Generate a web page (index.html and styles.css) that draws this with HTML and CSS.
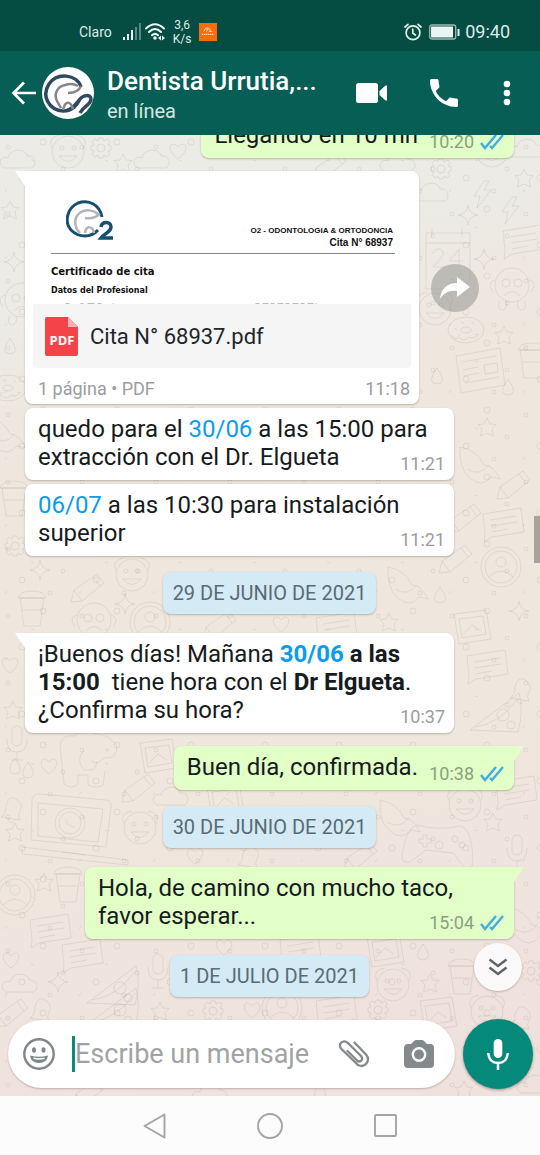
FILE: index.html
```html
<!DOCTYPE html>
<html lang="es">
<head>
<meta charset="utf-8">
<meta name="viewport" content="width=device-width, initial-scale=1">
<title>Chat</title>
<link rel="stylesheet" href="styles.css">
</head>
<body>
<div class="app">
  <div class="status">
    <span class="carrier">Claro</span>
    <svg class="signal" width="18" height="18" viewBox="0 0 18 18" fill="#f1f8f6"><rect x="0" y="14" width="2" height="3"/><rect x="4" y="11" width="2" height="6"/><rect x="8" y="7" width="2" height="10"/><g opacity=".35"><rect x="12" y="4" width="2" height="13"/><rect x="16" y="0" width="2" height="17"/></g></svg>
    <svg class="wifi" width="20" height="18" viewBox="0 0 20 18" fill="none" stroke="#f1f8f6" stroke-width="2" stroke-linecap="round"><path d="M1 5.500Q10-3 19 5.500M4 9Q10 3 16 9M7 12.300Q10 9.500 13 12.300"/><g fill="#f1f8f6" stroke="none"><circle cx="10" cy="15" r="1.800"/><path d="M13 15l3-2.500v5zM20 15l-3-2.500v5z"/></g></svg>
    <span class="speed">3,6<br>K/s</span>
    <svg class="shop" width="18" height="18" viewBox="0 0 19 19"><rect width="19" height="19" fill="#fb6a0d"/><g fill="none" stroke="#ffe3cc"><path d="M5 9q1-4 5-4M8 9q0-3 3-3 2 1 0 3h3" /><path d="M3 12h13" stroke-dasharray="1.500 .6" stroke-width="1.500"/></g></svg>
    <svg class="alarm" width="18" height="18" viewBox="0 0 18 18" fill="none" stroke="#e3efec" stroke-width="1.700" stroke-linecap="round"><circle cx="9" cy="9.700" r="6.900"/><path d="M8.800 6v4l2.500 2M1 4l3-2.700M17 4l-3-2.700"/></svg>
    <svg class="battery" width="31" height="16" viewBox="0 0 31 16"><rect x=".7" y="1" width="26" height="14" rx="2" fill="none" stroke="#9dbbb5" stroke-width="1.300"/><rect x="2" y="2.500" width="22" height="11" fill="#eaf3f1"/><rect x="28.500" y="5" width="2" height="7" fill="#e3efec"/></svg>
    <span class="clock">09:40</span>
  </div>

  <header class="header">
    <button class="icon-btn" aria-label="Atrás"><svg width="26" height="26" viewBox="0 0 26 26" fill="none" stroke="#fff" stroke-width="2.700"><path d="M25 13H3M13 2.500L2.500 13 13 23.500"/></svg></button>
    <svg class="avatar" width="52" height="52" viewBox="0 0 52 52" fill="none"><circle cx="26" cy="26" r="26" fill="#fff"/><path d="M39 20C35 7 15 5 7 17-1 29 7 43 21 44c10 0 14-6 17-12 3-4 11-5 11 0 0 6-7 6-11 14" stroke="#2f4960" stroke-width="3.500"/><path d="M38 32c-4 2-7 10-14 11" stroke="#2f4960" stroke-width="2"/><path d="M39 19c-2 5-7 7-13 7M36 19c-5-3-10-2-13-1-9 2-11 10-8 16l4 7M21 43c2-9 7-10 10-1" stroke="#88868a" stroke-width="2.500"/></svg>
    <div class="who"><h1>Dentista Urrutia,...</h1><p>en línea</p></div>
    <button class="icon-btn video" aria-label="Videollamada"><svg width="32" height="20" viewBox="0 0 32 20" fill="#fff"><rect width="22" height="20" rx="2.500"/><path d="M23.500 8L29 3q2-1.500 2 .5v13q0 2-2 .5l-5.500-5z"/></svg></button>
    <button class="icon-btn call" aria-label="Llamar"><svg width="28" height="28" viewBox="3 3 18 18" fill="#fff"><path d="M6.620 10.790c1.440 2.830 3.760 5.140 6.590 6.590l2.200-2.200c.27-.27.67-.36 1.020-.24 1.120.37 2.330.57 3.570.57.550 0 1 .45 1 1V20c0 .55-.45 1-1 1-9.390 0-17-7.610-17-17 0-.55.45-1 1-1h3.500c.55 0 1 .45 1 1 0 1.250.2 2.450.57 3.570.11.350.03.740-.25 1.020l-2.200 2.200z"/></svg></button>
    <button class="icon-btn more" aria-label="Más opciones"><svg width="8" height="26" viewBox="0 0 8 26" fill="#fff"><circle cx="4" cy="4" r="3.300"/><circle cx="4" cy="13" r="3.300"/><circle cx="4" cy="22" r="3.300"/></svg></button>
  </header>

  <main class="chat">
    <svg class="wallpaper" viewBox="0 135 540 961" preserveAspectRatio="xMidYMin slice" aria-hidden="true">
      <defs>
        <g id="star"><path d="M0-9l3 6 6 .5-4 4.500 1.500 7L0 6l-6.500 3L-5 2l-4-4.500L-3-3z"/></g>
        <g id="spark"><path d="M0-10Q1-1 10 0 1 1 0 10-1 1-10 0-1-1 0-10z"/></g>
        <g id="heart"><path d="M0 8C-14-2-6-12 0-4 6-12 14-2 0 8z"/></g>
        <g id="drop"><path d="M0-9q11 15 0 16-11-1 0-16z"/></g>
        <g id="gear"><circle r="4"/><path d="M-2-10h4l1 3 4-2 2 3-2 3 3 1v4l-3 1 2 3-3 3-3-2-1 3h-4l-1-3-3 2-3-3 2-3-3-1v-4l3-1-2-3 3-3 3 2z"/></g>
        <g id="cloud"><path d="M-14 8c-8-5-2-13 4-10C-8-12 8-12 9-4c9-1 10 9 5 12z"/></g>
        <g id="note"><path d="M-20-9L18-15l3 24-32 5-8 5 1-8zM-13-3l26-4M-12 3l26-4M-11 9l16-3"/></g>
        <g id="paper"><path d="M-24-14L20-22l5 37-44 8zM-18-8l34-6M-17 0l15-3M-16 6l15-3M-15 13l34-6M4-5l13-2 1 9-13 2z"/></g>
        <g id="donut"><ellipse rx="18" ry="13"/><ellipse rx="5" ry="3"/><path d="M-12-2l3 2M-8 6l3-2M8-6l-2-2M9 5l3-1M-5-8l3 1M-15 5q4 6 8 2 5 6 10 0 5 3 10-3"/></g>
        <g id="monkey"><circle r="17"/><circle cx="-6" cy="-2" r="4"/><circle cx="6" cy="-2" r="4"/><path d="M-17-5q-9 2-2 12M17-5q9 2 2 12M-8 11Q0 2 8 11M-12 16q-4 7 2 9 6-1 4-9M12 16q4 7-2 9-6-1-4-9"/></g>
        <g id="laptop"><path d="M-38-28q2-6 8-5l66 6q6 1 5 7l-5 40-75-7zM-32-24l65 6-5 33-60-6zM-48 20l106 13v5L-48 27zM-8 25l24 3"/><circle cy="-4" r="15"/><circle cy="-4" r="11"/><path d="M-4-8q0 7 9 8"/></g>
        <g id="pad"><path d="M-24-22q22 6 43 1 12 2 13 35-1 12-9 6L12 6l-27-3-16 12q-9 2-8-7 4-27 15-30z"/><path d="M-18-12h4v4h4v4h-4v4h-4v-4h-4v-4h4z"/><circle cx="14" cy="-8" r="3"/><circle cx="21" cy="-2" r="3"/><circle cx="-2" cy="-2" r="4"/></g>
        <g id="contact"><circle r="20"/><circle r="16"/><circle cy="-5" r="5"/><path d="M-12 10Q0-2 12 10"/></g>
        <g id="pencil"><path d="M-17 12l3-12L9-16l7 9-22 18zM-14 0l8 11M5-13l7 9"/></g>
        <g id="mic"><rect x="-5" y="-14" width="10" height="20" rx="5"/><path d="M-10-1q0 13 10 13T10-1M0 12v8M-6 20H6"/></g>
        <g id="ele"><path d="M-30 24l-4-38q1-12 15-10 8-12 20-2 14 0 22 12 0 14-14 12-5 8-12 3M-30 24q8 6 14 0v-9h10v10q9 4 15 0l2-14M-10-10q-9 10 0 20 12 2 13-8"/><circle cx="13" cy="-10" r="1"/></g>
        <g id="calendar"><path d="M-20-22H24V26l-9 8h-35zM-20-12H24M-14-27v9M16-27v9M-13-1q1-6 7-5 6 3 1 9l-8 9H0M13 12V-6L4 6h13"/></g>
        <g id="pic"><path d="M-18-13l32-4 5 29-32 5zM-13-8l24-3 3 18-24 4zM-9 7L0-2l9 6"/></g>
        <g id="pizza"><path d="M-25 17L24-20q5 17-1 39zM-20 14q25-3 43-29"/><circle cx="8" cy="2" r="6"/><circle cx="16" cy="12" r="4"/></g>
        <g id="bell"><path d="M-12 8q5-3 5-11Q-4-15 3-10q8 5 4 12-3 5 0 9zM-5 10q2 7 7 1"/></g>
        <g id="face"><circle r="16"/><circle cx="-6" cy="-4" r="2"/><circle cx="6" cy="-4" r="2"/><path d="M-9 4Q0 15 9 4zM-16-4Q-21-15-8-17M16-4Q21-15 8-17"/></g>
        <g id="bolt"><path d="M2-12L-8 3h6l-3 12L9-3H2l5-9z"/></g>
        <g id="cup"><path d="M-12-12h24l-4 28H-8zM-14-12q2-7 14-7t14 7zM-10 0h20"/></g>
        <g id="bird"><path d="M-22-18Q-5-15 2 0q9 0 16 14l-9-2q-10 12-22 0-10-8-9-30zM-15 4q12 8 22-4"/></g>
        <pattern id="dots" width="74" height="67" patternUnits="userSpaceOnUse"><circle cx="8" cy="13" r="2"/><circle cx="43" cy="8" r="3"/><circle cx="63" cy="35" r="2"/><circle cx="22" cy="44" r="3"/><circle cx="50" cy="57" r="2"/><path d="M31 26l3 1M5 58l2-3"/></pattern>
      </defs>
      <rect y="135" width="540" height="961" fill="url(#dots)" stroke="none"/>
      <use href="#cloud" x="18" y="160"/><use href="#face" x="68" y="152"/><use href="#gear" x="101" y="148"/><use href="#star" x="123" y="163"/><use href="#cloud" x="152" y="160"/><use href="#heart" x="178" y="151"/><use href="#pencil" x="330" y="168"/><use href="#cloud" x="398" y="163"/><use href="#gear" x="441" y="169"/><use href="#face" x="492" y="151"/><use href="#cloud" x="527" y="149"/>
      <use href="#star" x="10" y="210"/><use href="#spark" x="14" y="262"/><use href="#monkey" x="22" y="300"/><use href="#drop" x="10" y="347"/><use href="#donut" x="8" y="388"/>
      <use href="#cloud" x="431" y="193"/><use href="#bolt" x="482" y="193"/><use href="#star" x="524" y="178"/><use href="#spark" x="468" y="215"/><use href="#bolt" x="510" y="209"/><use href="#calendar" x="446" y="255"/><use href="#note" x="523" y="240"/><use href="#spark" x="484" y="259"/><use href="#monkey" x="512" y="285"/><use href="#face" x="435" y="309"/><use href="#donut" x="466" y="330"/><use href="#star" x="504" y="335"/><use href="#paper" x="480" y="370"/><use href="#cup" x="532" y="362"/><use href="#drop" x="437" y="377"/><use href="#drop" x="508" y="388"/>
      <use href="#bird" x="8" y="434"/><use href="#cup" x="14" y="500"/><use href="#gear" x="15" y="546"/><use href="#star" x="487" y="427"/><use href="#bird" x="482" y="465"/><use href="#pencil" x="514" y="487"/><use href="#note" x="503" y="523"/><use href="#pencil" x="465" y="520"/><use href="#contact" x="501" y="567"/><use href="#pencil" x="456" y="561"/><use href="#drop" x="440" y="596"/><use href="#bird" x="410" y="585"/><use href="#pic" x="472" y="627"/><use href="#spark" x="519" y="611"/>
      <use href="#spark" x="40" y="570"/><use href="#cup" x="32" y="610"/><use href="#pencil" x="88" y="590"/><use href="#face" x="132" y="575"/><use href="#spark" x="125" y="604"/><use href="#monkey" x="94" y="620"/><use href="#contact" x="150" y="622"/><use href="#pencil" x="220" y="627"/><use href="#heart" x="281" y="624"/><use href="#note" x="336" y="627"/><use href="#star" x="389" y="622"/>
      <use href="#note" x="487" y="665"/><use href="#bell" x="522" y="690"/><use href="#pizza" x="495" y="713"/><use href="#heart" x="10" y="665"/><use href="#star" x="13" y="710"/><use href="#mic" x="17" y="740"/>
      <use href="#ele" x="94" y="760"/><use href="#heart" x="49" y="766"/><use href="#drop" x="15" y="767"/><use href="#drop" x="28" y="771"/><use href="#pic" x="158" y="756"/><use href="#pencil" x="139" y="790"/><use href="#bell" x="13" y="809"/><use href="#laptop" x="70" y="827"/><use href="#face" x="140" y="828"/><use href="#cloud" x="171" y="797"/><use href="#star" x="15" y="832"/><use href="#pic" x="225" y="800"/><use href="#contact" x="15" y="895"/><use href="#star" x="44" y="882"/><use href="#cup" x="68" y="886"/><use href="#note" x="50" y="929"/><use href="#note" x="82" y="954"/><use href="#heart" x="11" y="960"/><use href="#cloud" x="20" y="984"/><use href="#spark" x="58" y="982"/><use href="#pizza" x="112" y="986"/><use href="#mic" x="158" y="968"/>
      <use href="#heart" x="195" y="856"/><use href="#bell" x="250" y="857"/><use href="#bird" x="402" y="818"/><use href="#pad" x="441" y="847"/><use href="#mic" x="517" y="849"/><use href="#note" x="516" y="791"/><use href="#face" x="465" y="805"/><use href="#star" x="493" y="822"/><use href="#pencil" x="361" y="858"/><use href="#bird" x="530" y="925"/><use href="#heart" x="224" y="947"/><use href="#note" x="300" y="949"/><use href="#pic" x="385" y="950"/><use href="#drop" x="423" y="953"/><use href="#face" x="393" y="985"/><use href="#star" x="430" y="983"/><use href="#cup" x="462" y="978"/><use href="#gear" x="531" y="971"/>
      <use href="#pencil" x="12" y="1015"/><use href="#bell" x="42" y="1010"/><use href="#pizza" x="112" y="1008"/><use href="#star" x="160" y="1011"/><use href="#gear" x="213" y="1011"/><use href="#heart" x="252" y="1010"/><use href="#contact" x="282" y="1008"/><use href="#note" x="336" y="1010"/><use href="#gear" x="378" y="1010"/><use href="#pic" x="438" y="1014"/><use href="#face" x="487" y="1012"/><use href="#bell" x="522" y="1018"/><use href="#star" x="464" y="1090"/><use href="#cloud" x="535" y="1085"/><use href="#drop" x="320" y="1092"/><use href="#cloud" x="210" y="1094"/><use href="#pencil" x="90" y="1094"/>
    </svg>

    <div class="messages">
      <div class="bubble sent first"><p>Llegando en 10 mn</p><span class="meta"><time>10:20</time><svg class="ticks" width="24" height="16" viewBox="0 0 24 16"><path d="M1 9l4 5L16 1M10 12l2 2L23 1"/></svg></span></div>

      <div class="doc-row">
        <article class="doc tail">
          <div class="preview">
            <div class="letterhead">
              <svg width="48" height="42" viewBox="0 0 48 42" fill="none"><path d="M36 17C34 5 23-1 12 3 1 8-2 22 5 30c8 8 20 8 27 0" stroke="#174f70" stroke-width="3"/><path d="M34 14c-5 4-10 5-15 4M32 14c-5-4-12-5-17-2-8 5-7 15-1 21M19 33c1-8 8-7 9 0" stroke="#b5b3b8" stroke-width="2.500"/><path d="M35 27c1-6 10-6 10 0 0 5-6 6-10 11h12" stroke="#174f70" stroke-width="3.500"/></svg>
              <div class="issuer"><p>O2 - ODONTOLOGIA &amp; ORTODONCIA</p><p class="number">Cita N° 68937</p></div>
            </div>
            <h2>Certificado de cita</h2>
            <h3>Datos del Profesional</h3>
            <svg class="cut" width="343" height="1" viewBox="0 0 343 1" stroke="#bbb"><path d="M14 .5h48" stroke-dasharray="4 11 3 4 7 3"/><path d="M204 .5h61" stroke-dasharray="4 3 6 2"/></svg>
          </div>
          <a class="file" href="#">
            <svg width="33" height="39" viewBox="0 0 33 39"><path d="M2 0h21l10 10v27q0 2-2 2H2q-2 0-2-2V2q0-2 2-2z" fill="#f4444a"/><path d="M23 0l10 10H23z" fill="#fab0b1"/><text x="17" y="28" text-anchor="middle" class="pdf">PDF</text></svg>
            <span>Cita N° 68937.pdf</span>
          </a>
          <div class="doc-meta"><span>1 página • PDF</span><time>11:18</time></div>
        </article>
        <button class="forward" aria-label="Reenviar"><svg width="30" height="22" viewBox="0 0 30 22" fill="#fff"><path d="M17 0l13 10-13 10v-6C9 13 4 16 0 22 1 12 7 6 17 6z"/></svg></button>
      </div>

      <div class="bubble received"><p>quedo para el <a href="#">30/06</a> a las 15:00 para extracción con el Dr. Elgueta</p><span class="meta"><time>11:21</time></span></div>
      <div class="bubble received"><p><a href="#">06/07</a> a las 10:30 para instalación superior</p><span class="meta"><time>11:21</time></span></div>

      <div class="date">29 DE JUNIO DE 2021</div>
      <div class="bubble received tail"><p>¡Buenos días! Mañana <b><a href="#">30/06</a> a las 15:00</b>&nbsp; tiene hora con el <b>Dr Elgueta</b>. ¿Confirma su hora?</p><span class="meta"><time>10:37</time></span></div>
      <div class="bubble sent tail new-turn"><p>Buen día, confirmada.</p><span class="meta"><time>10:38</time><svg class="ticks" width="24" height="16" viewBox="0 0 24 16"><path d="M1 9l4 5L16 1M10 12l2 2L23 1"/></svg></span></div>

      <div class="date">30 DE JUNIO DE 2021</div>
      <div class="bubble sent tail"><p>Hola, de camino con mucho taco, favor esperar...</p><span class="meta"><time>15:04</time><svg class="ticks" width="24" height="16" viewBox="0 0 24 16"><path d="M1 9l4 5L16 1M10 12l2 2L23 1"/></svg></span></div>

      <div class="date last">1 DE JULIO DE 2021</div>
    </div>

    <div class="scroll-thumb"></div>
    <button class="jump" aria-label="Ir al final"><svg width="20" height="18" viewBox="0 0 20 18" fill="none" stroke="#606467" stroke-width="2.500"><path d="M1.500 1.500L10 8l8.500-6.500M1.500 9.500L10 16l8.500-6.500"/></svg></button>

    <form class="composer">
      <div class="field">
        <button type="button" class="icon-btn" aria-label="Emojis"><svg width="32" height="32" viewBox="0 0 32 32" fill="none"><circle cx="16" cy="16" r="14.700" stroke="#7f868b" stroke-width="2.400"/><g fill="#7f868b"><ellipse cx="11" cy="12" rx="2" ry="2.800"/><ellipse cx="20.500" cy="12" rx="2" ry="2.800"/><path d="M7 17.500q9 2.500 18 0-1 7.500-9 7.500t-9-7.500z"/></g><path d="M10.500 20.300q5.500 1.300 11 0" stroke="#fff" stroke-width="1.600"/></svg></button>
        <input type="text" aria-label="Mensaje" placeholder="Escribe un mensaje">
        <button type="button" class="icon-btn clip" aria-label="Adjuntar"><svg width="32" height="28" viewBox="0 0 32 28" fill="none" stroke="#84898c" stroke-width="2.300" stroke-linecap="round"><path d="M16.500 2.500L28 14.500c5 6-1 14-8 10.500L3.500 9C-1 4 5-1 10 3l13 13c3 4-1 7-4 4.500L9.500 11"/></svg></button>
        <button type="button" class="icon-btn" aria-label="Cámara"><svg width="30" height="28" viewBox="0 0 30 28"><path d="M10 1q1-1 2-1h6q1 0 2 1l3 3h3q4 0 4 4v16q0 4-4 4H4q-4 0-4-4V8q0-4 4-4h3z" fill="#84898c"/><circle cx="15" cy="14.500" r="6.200" fill="none" stroke="#fff" stroke-width="2.400"/></svg></button>
      </div>
      <button type="button" class="record" aria-label="Grabar"><svg width="22" height="31" viewBox="0 0 22 31" fill="none"><rect x="6.700" y="0" width="8.600" height="19" rx="4.300" fill="#fff"/><path d="M1.200 14q.8 10 9.800 10t9.800-10M11 24v7" stroke="#fff" stroke-width="2.500"/></svg></button>
    </form>
  </main>

  <nav class="system">
    <button class="icon-btn" aria-label="Volver"><svg width="23" height="26" viewBox="0 0 23 26" fill="none" stroke="#a4a4a4" stroke-width="1.900" stroke-linejoin="round"><path d="M21.500 1.500v23L1.500 13z"/></svg></button>
    <button class="icon-btn" aria-label="Inicio"><svg width="26" height="26" viewBox="0 0 26 26" fill="none" stroke="#a4a4a4" stroke-width="1.900"><circle cx="13" cy="13" r="12"/></svg></button>
    <button class="icon-btn" aria-label="Recientes"><svg width="23" height="23" viewBox="0 0 23 23" fill="none" stroke="#a4a4a4" stroke-width="1.900"><rect x="1" y="1" width="21" height="21" rx="1"/></svg></button>
  </nav>
</div>
</body>
</html>
```

FILE: styles.css
```css
* { box-sizing: border-box; }
body { margin: 0; font-family: Roboto, "Noto Sans", sans-serif; color: #161b1e; }
h1, h2, h3, p { margin: 0; }
button { border: 0; padding: 0; background: none; font: inherit; }
svg { display: block; flex: none; }
a { color: #0b9cee; text-decoration: none; }

.app { display: flex; flex-direction: column; height: 100vh; overflow: hidden; }
.icon-btn { display: flex; align-items: center; justify-content: center; flex: none; }

.status { display: flex; align-items: center; flex: none; padding: 12px 30px 0 79px; height: 51px; background: #054c43; color: #dcebe8; }
.carrier { font-size: 14px; margin-right: 11px; }
.wifi { margin-left: 4px; }
.speed { font-size: 12px; line-height: 14px; text-align: center; margin-left: 8px; }
.shop { margin-left: 8px; }
.alarm { margin-left: auto; }
.battery { margin: 0 5px 0 7px; }
.clock { font-size: 18px; }

.header { display: flex; align-items: center; flex: none; height: 84px; padding: 0 29px 0 11px; background: #075e54; color: #fff; z-index: 2; }
.avatar { margin-left: 5px; }
.who { flex: 1; min-width: 0; padding: 3px 0 0 13px; }
.who h1 { font-size: 26px; line-height: 32px; font-weight: 500; white-space: nowrap; }
.who p { font-size: 20px; line-height: 28px; color: #d5e6e3; }
.call { margin-left: 42px; }
.more { margin-left: 45px; }

.chat { position: relative; flex: 1; min-height: 0; display: flex; flex-direction: column; background: linear-gradient(165deg, #ecebe7 0%, #ecebe6 16%, #efe6de 30%, #efe6dd 65%, #efe2de 88%, #efe1dc 100%); }
.wallpaper { position: absolute; inset: 0; width: 100%; height: 100%; fill: none; stroke: #75695f; stroke-opacity: .13; stroke-width: 1; }
.messages { position: relative; flex: 1; min-height: 0; overflow: hidden; display: flex; flex-direction: column; justify-content: flex-end; padding: 0 26px 22px 25px; }
.messages > * { flex: none; }

.bubble { position: relative; display: grid; max-width: 429px; padding: 7px 9px 7px 13px; border-radius: 8px; font-size: 24px; line-height: 28px; box-shadow: 0 1px 2px rgba(70, 60, 50, .3); }
.bubble p, .bubble .meta { grid-area: 1 / 1; }
.bubble p { padding-bottom: 2px; }
.bubble p::after { content: ""; display: inline-block; width: 58px; }
.received { align-self: flex-start; background: #fff; margin-bottom: 4px; }
.sent { align-self: flex-end; background: #e1ffc7; padding-right: 10px; }
.sent p::after { width: 86px; }
.meta { display: flex; align-items: center; gap: 6px; align-self: end; justify-self: end; font-size: 18px; line-height: 18px; color: #9a9d9f; }
.sent .meta { color: #8b9f7f; }
.ticks { fill: none; stroke: #41ade0; stroke-width: 2.4; }
.first { margin-bottom: 13px; }
.new-turn { margin-top: 9px; }
.received.tail, .doc.tail { border-top-left-radius: 0; }
.sent.tail { border-top-right-radius: 0; }
.tail::before { content: ""; position: absolute; top: 0; width: 10px; height: 15px; }
.received.tail::before, .doc.tail::before { left: -10px; background: #fff; clip-path: polygon(0 0, 100% 0, 100% 100%); }
.sent.tail::before { right: -10px; background: #e1ffc7; clip-path: polygon(0 0, 100% 0, 0 100%); }

.doc-row { display: flex; align-items: center; gap: 12px; margin-bottom: 4px; }
.doc { position: relative; flex: 0 1 394px; padding: 8px 8px 5px; background: #fff; border-radius: 8px; box-shadow: 0 1px 2px rgba(70, 60, 50, .3); }
.preview { padding: 21px 16px 0 18px; font-family: "DejaVu Sans", sans-serif; color: #111; }
.letterhead { display: flex; justify-content: space-between; align-items: flex-end; height: 54px; padding: 0 2px 0 15px; border-bottom: 1px solid #888; }
.letterhead svg { align-self: flex-start; }
.issuer { font-family: "Liberation Sans", sans-serif; font-weight: 700; font-size: 8px; line-height: 12px; text-align: right; padding-bottom: 4px; }
.issuer .number { font-size: 10px; }
.preview h2 { font-size: 10px; line-height: 14px; margin-top: 11px; }
.preview h3 { font-size: 8px; line-height: 12px; margin: 6px 0; }
.cut { width: 100%; }
.file { display: flex; align-items: center; gap: 12px; height: 64px; padding: 0 12px; background: #f5f5f5; border-radius: 0 0 4px 4px; color: #20262a; font-size: 22px; }
.pdf { font: 700 13px "Open Sans", sans-serif; fill: #fff; }
.doc-meta { display: flex; justify-content: space-between; padding: 11px 1px 0 5px; font-size: 18px; line-height: 20px; color: #9a9d9f; }
.forward { display: flex; align-items: center; justify-content: center; flex: none; width: 48px; height: 48px; border-radius: 50%; background: rgba(150, 150, 148, .55); }

.date { align-self: center; margin: 12px 0 19px; padding: 0 10px; border-radius: 8px; background: #d4eaf4; color: #596b75; font-size: 20px; line-height: 42px; box-shadow: 0 1px 2px rgba(70, 60, 50, .3); }
.sent + .date { margin-top: 16px; }
.date.last { margin-bottom: 0; }

.scroll-thumb { position: absolute; right: 0; top: 381px; width: 6px; height: 47px; background: #aaa29c; }
.jump { position: absolute; right: 18px; bottom: 105px; width: 48px; height: 48px; display: flex; align-items: center; justify-content: center; border-radius: 50%; background: #faf8f8; box-shadow: 0 1px 2px rgba(70, 60, 50, .3); }

.composer { position: relative; display: flex; align-items: center; gap: 8px; flex: none; padding: 0 7px 7px 8px; }
.field { flex: 1; min-width: 0; display: flex; align-items: center; height: 68px; padding: 0 21px 0 15px; border-radius: 34px; background: #fff; box-shadow: 0 1px 2px rgba(70, 60, 50, .3); }
.field input { flex: 1; min-width: 0; height: 36px; margin-left: 17px; padding: 0; border: 0; border-left: 3px solid #0b8a78; outline: 0; background: none; font: 27px Roboto, "Noto Sans", sans-serif; color: #161b1e; }
.field input::placeholder { color: #a0a3a5; opacity: 1; }
.clip { margin-right: 34px; }
.record { display: flex; align-items: center; justify-content: center; flex: none; width: 70px; height: 70px; border-radius: 50%; background: #04897b; box-shadow: 0 1px 3px rgba(70, 60, 50, .5); }

.system { display: flex; align-items: center; justify-content: center; gap: 91px; flex: none; height: 59px; background: #fcfcfc; }
```
